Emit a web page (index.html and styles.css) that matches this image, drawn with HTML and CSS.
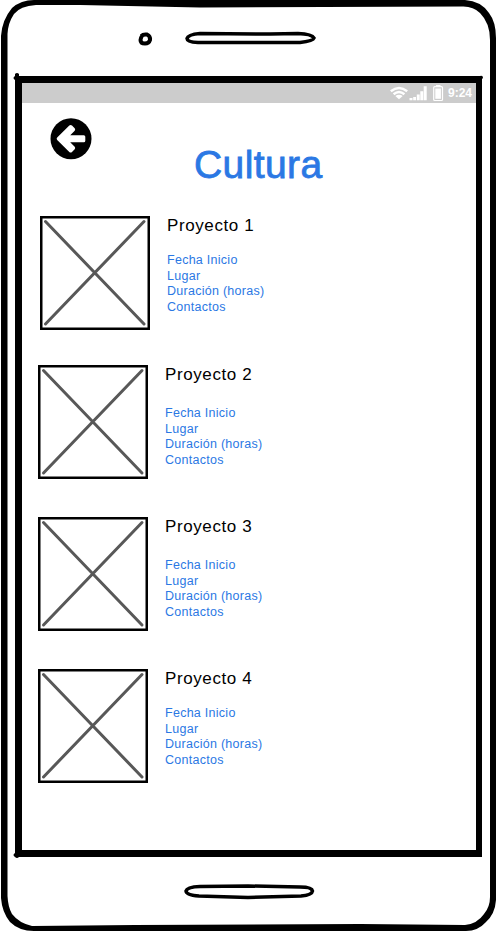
FILE: index.html
```
<!DOCTYPE html>
<html lang="es">
<head>
<meta charset="utf-8">
<title>Cultura</title>
<link rel="stylesheet" href="styles.css">
</head>
<body>
<div class="phone">
  <svg class="frame" viewBox="0 0 496 931" aria-hidden="true">
    <path fill-rule="evenodd" d="M1 36Q2 20 12 8Q21 0 34 0H465Q481 1 489 13Q496 22 496 38V900Q495 914 486 922Q478 931 466 931H34Q19 931 10 922Q2 912 1 898ZM7.500 34V896Q8 907 12 914Q19 923 32 926L135 925L360 924L465 925Q477 924 484 914Q490 907 490 897V40Q490 23 480 13Q473 6 462 6.500L200 7.500L80 5L36 5Q20 6 14 14Q8 23 7.500 34Z"/>
    <path fill-rule="evenodd" d="M15 74Q17 72 19 74L19 76H480Q483 75 483 78L482 79V857H19Q17 859 15 857Q12 855 15 853V80Q12 78 15 76ZM22 83V850H476V83Z"/>
    <g fill="none" stroke="#000" stroke-width="3.500">
      <path stroke-width="4" d="M141.500 36Q143 34 147 34.500Q150.500 36 150 40Q149 43.500 145 43.500Q140.500 43.500 140.500 40Q140.500 38 142.500 35"/>
      <path d="M200 33.500L270 34L298 33.500Q312 34 314 38Q313 41 300 42.500H198Q187 42 187 38.500Q188 34.500 200 33.500Z"/>
      <path d="M200 886.500L248 886L300 887Q312 887 312.500 891Q312 895 301 896L248 897.500L199 896Q186 895 186 891Q187 887 200 886.500Z"/>
    </g>
  </svg>
  <div class="status">
    <svg class="signals" viewBox="0 0 54 18" aria-hidden="true">
      <g fill="none" stroke="#fff" stroke-width="2.500">
        <path d="M.8 7.200Q9 .8 17.200 7.200M3.600 10.200Q9 5.800 14.400 10.200"/>
        <path fill="#fff" stroke="none" d="M5.300 12Q9 9.300 12.700 12L9 15.300Z"/>
      </g>
      <path fill="#fff" d="M19.500 14h3v2.300h-3zM23.200 13h2.800v3.300h-2.800zM26.800 10.500h2.900v5.800h-2.900zM30.300 7.300h2.900v9h-2.900zM33.700 2.300h3v14h-3zM46 1h4.500v2H46z"/>
      <rect x="43.700" y="2.700" width="8.800" height="13.800" rx="1" fill="none" stroke="#fff" stroke-width="1.200"/>
      <path fill="#fff" d="M45.300 4.500h5.600v10.300h-5.600z"/>
    </svg>
    <span class="time">9:24</span>
  </div>
  <header class="header">
    <svg class="back" viewBox="0 0 42 42" role="img" aria-label="Volver">
      <circle cx="21" cy="20.700" r="20.500"/>
      <path fill="#fff" d="M7.200 19.400L19.300 7.500Q20.700 6.400 22 7.600L24.700 10.200Q25.700 11.500 24.700 12.700L20.200 17.200H33.800Q35.300 17.200 35.300 18.700V22.800Q35.300 24.300 33.800 24.300H20.200L24.700 28.800Q25.700 30 24.700 31.200L22 33.900Q20.700 35 19.300 33.900L7.200 22Q6 20.700 7.200 19.400Z"/>
    </svg>
    <h1 class="title">Cultura</h1>
  </header>
  <main class="projects">
    <article class="project first">
      <svg class="thumb" viewBox="0 0 110 114"><rect x="1.250" y="1.250" width="107.500" height="111.500"/><path d="M5.500 5.500L104 108M104 5.500L5.500 108"/></svg>
      <div class="info"><h2>Proyecto 1</h2><ul><li>Fecha Inicio</li><li>Lugar</li><li>Duración (horas)</li><li>Contactos</li></ul></div>
    </article>
    <article class="project roomy">
      <svg class="thumb" viewBox="0 0 110 114"><rect x="1.250" y="1.250" width="107.500" height="111.500"/><path d="M5.500 5.500L104 108M104 5.500L5.500 108"/></svg>
      <div class="info"><h2>Proyecto 2</h2><ul><li>Fecha Inicio</li><li>Lugar</li><li>Duración (horas)</li><li>Contactos</li></ul></div>
    </article>
    <article class="project roomy">
      <svg class="thumb" viewBox="0 0 110 114"><rect x="1.250" y="1.250" width="107.500" height="111.500"/><path d="M5.500 5.500L104 108M104 5.500L5.500 108"/></svg>
      <div class="info"><h2>Proyecto 3</h2><ul><li>Fecha Inicio</li><li>Lugar</li><li>Duración (horas)</li><li>Contactos</li></ul></div>
    </article>
    <article class="project">
      <svg class="thumb" viewBox="0 0 110 114"><rect x="1.250" y="1.250" width="107.500" height="111.500"/><path d="M5.500 5.500L104 108M104 5.500L5.500 108"/></svg>
      <div class="info"><h2>Proyecto 4</h2><ul><li>Fecha Inicio</li><li>Lugar</li><li>Duración (horas)</li><li>Contactos</li></ul></div>
    </article>
  </main>
</div>
</body>
</html>
```
FILE: styles.css
```
* { box-sizing: border-box; }
body {
  margin: 0;
  background: #fff;
  font-family: "Liberation Sans", Arial, sans-serif;
}
.phone {
  position: relative;
  width: 496px;
  height: 931px;
  padding: 83px 20px 0 22px;
  overflow: hidden;
}
.frame {
  position: absolute;
  inset: 0;
  width: 496px;
  height: 931px;
}
.status {
  display: flex;
  align-items: center;
  justify-content: flex-end;
  gap: 4px;
  height: 20px;
  padding-right: 4px;
  background: #ccc;
  color: #fff;
}
.signals { width: 54px; height: 18px; }
.time {
  font-size: 12px;
  font-weight: 700;
  line-height: 20px;
}
.header {
  display: flex;
  align-items: flex-start;
  height: 113px;
  padding: 15px 0 0 28px;
}
.back { width: 42px; height: 42px; }
.title {
  margin: 25px 0 0 102px;
  color: #2b78e4;
  font-size: 39px;
  font-weight: 400;
  line-height: 44px;
  letter-spacing: 0.4px;
  -webkit-text-stroke: 0.8px #2b78e4;
}
.projects {
  display: flex;
  flex-direction: column;
  gap: 38px;
  padding-left: 16px;
}
.project {
  display: flex;
  gap: 17px;
  height: 114px;
}
.first {
  margin: 0 0 -3px 2px;
}
.thumb {
  width: 110px;
  height: 114px;
  fill: none;
  stroke: #000;
  stroke-width: 2.5;
}
.thumb path {
  stroke: #585858;
  stroke-width: 3;
  stroke-linecap: round;
}
h2 {
  margin: 0;
  font-size: 17px;
  font-weight: 400;
  line-height: 20px;
  letter-spacing: 0.6px;
}
ul {
  margin: 17px 0 0;
  padding: 0;
  list-style: none;
  color: #2b78e4;
  font-size: 12.500px;
  line-height: 15.670px;
  letter-spacing: 0.27px;
}
.roomy ul { margin-top: 21px; }
```
